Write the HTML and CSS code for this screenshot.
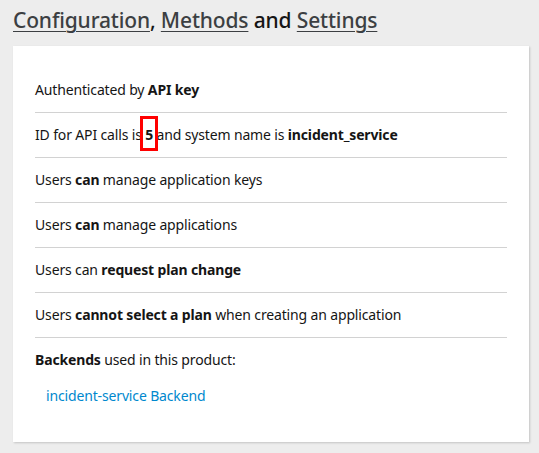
FILE: index.html
```html
<!DOCTYPE html>
<html>
<head>
<meta charset="utf-8">
<link rel="stylesheet" href="styles.css">
</head>
<body>
<h1 class="title"><a href="#">Configuration</a>, <a href="#">Methods</a> and <a href="#">Settings</a></h1>
<section class="card">
  <ul class="rows">
    <li class="row">Authenticated by <strong>API key</strong></li>
    <li class="row">ID for API calls is <strong class="hl">5</strong> and system name is <strong>incident_service</strong></li>
    <li class="row">Users <strong>can</strong> manage application keys</li>
    <li class="row">Users <strong>can</strong> manage applications</li>
    <li class="row">Users can <strong>request plan change</strong></li>
    <li class="row">Users <strong>cannot select a plan</strong> when creating an application</li>
    <li class="row last">
      <div><strong>Backends</strong> used in this product:</div>
      <ul class="backends">
        <li><a href="#">incident-service Backend</a></li>
      </ul>
    </li>
  </ul>
</section>
</body>
</html>
```
FILE: styles.css
```css
html, body {
  margin: 0;
  padding: 0;
}
body {
  background: #ededed;
  font-family: "Noto Sans", "Liberation Sans", sans-serif;
  color: #151515;
  padding: 5px 10px 12px 13px;
}
.title {
  margin: 0 0 11px;
  font-size: 21px;
  font-weight: 500;
  line-height: 30px;
  color: #151515;
  letter-spacing: -0.15px;
}
.title a {
  color: #3c3f42;
  text-decoration: underline;
  text-underline-offset: 3px;
  text-decoration-thickness: 1px;
}
.card {
  background: #fff;
  box-shadow: 1px 1px 2px rgba(0,0,0,0.18);
  padding: 22px 22px 24px 22px;
}
.rows {
  list-style: none;
  margin: 0;
  padding: 0;
}
.row {
  font-size: 14px;
  line-height: 20px;
  letter-spacing: -0.15px;
  padding: 12px 0 12px;
  border-bottom: 1px solid #d2d2d2;
}
.row.last {
  border-bottom: none;
}
.row strong {
  font-weight: 700;
}
.hl {
  position: relative;
}
.hl::after {
  content: "";
  position: absolute;
  left: -5px;
  right: -5px;
  top: -9px;
  bottom: -7px;
  border: 3px solid #ff0000;
}
.backends {
  list-style: none;
  margin: 16px 0 0;
  padding: 0 0 0 11px;
}
.backends a {
  color: #0088ce;
  text-decoration: none;
}
```
